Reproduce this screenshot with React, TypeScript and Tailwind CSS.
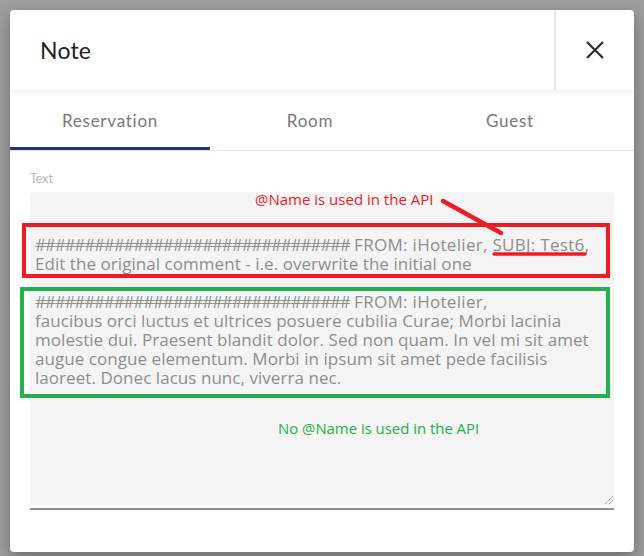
const body = "font-['Lato',sans-serif]";

const hashes = "################################";

const tabs = ["Reservation", "Room", "Guest"];

const greenLines = [
  "faucibus orci luctus et ultrices posuere cubilia Curae; Morbi lacinia",
  "molestie dui. Praesent blandit dolor. Sed non quam. In vel mi sit amet",
  "augue congue elementum. Morbi in ipsum sit amet pede facilisis",
  "laoreet. Donec lacus nunc, viverra nec.",
];

function Hashes() {
  return <span className="tracking-[-1.15px]">{hashes}</span>;
}

function CloseIcon() {
  return (
    <svg width="18" height="18" viewBox="0 0 18 18" className="text-[#2b2b2b]">
      <path d="M1 1 17 17M17 1 1 17" stroke="currentColor" strokeWidth="2.2" fill="none" />
    </svg>
  );
}

function ResizeGrip() {
  return (
    <svg width="10" height="10" viewBox="0 0 10 10" className="text-[#777]">
      <path d="M1 9 9 1M5 9 9 5" stroke="currentColor" strokeWidth="1" strokeDasharray="1 1" fill="none" />
    </svg>
  );
}

export default function App() {
  return (
    <div className={`w-[644px] h-[556px] bg-[#9d9d9d] pt-[10px] px-[10px] ${body}`}>
      <div className="h-[542px] bg-white rounded-[4px] shadow-[0_6px_16px_rgba(0,0,0,0.3)] flex flex-col overflow-hidden">
        {/* header */}
        <div className="relative z-10 h-[80px] flex shadow-[0_3px_5px_rgba(0,0,0,0.05)]">
          <div className="flex-1 flex items-center pl-[30px] text-[23px] text-[#222] tracking-[0.2px]">Note</div>
          <div className="w-[80px] border-l-2 border-[#e6e6e6] flex items-center justify-center">
            <CloseIcon />
          </div>
        </div>

        {/* tabs */}
        <div className="border-b border-[#e2e2e2]">
          <div className="w-[600px] grid grid-cols-3">
            {tabs.map((t, i) => (
              <div key={t} className="h-[60px] flex flex-col pt-[4px]">
                <div className="flex-1 flex items-center justify-center text-[17px] text-[#777] tracking-[0.75px]">{t}</div>
                <div className={i === 0 ? "h-[3px] bg-[#1c3580]" : "h-[3px]"} />
              </div>
            ))}
          </div>
        </div>

        {/* body */}
        <div className="px-[20px] pt-[20px]">
          <div className="text-[12.5px] leading-[16px] text-[#b5b5b5] mb-[5px]">Text</div>
          <div className="relative h-[313px] bg-[#f4f4f4] rounded-[4px] px-[5px] pt-[5px] text-[17px] leading-[19px] tracking-[0.05px] text-[#8e8e8e] font-['Open_Sans',sans-serif]">
            <div className="h-[19px]" />
            <div className="h-[19px]" />
            <div className="whitespace-nowrap">
              <Hashes /> <span className="tracking-[0.3px]">FROM: iHotelier, SUBJ: Test6,</span>
            </div>
            <div className="whitespace-nowrap">Edit the original comment - i.e. overwrite the initial one</div>
            <div className="h-[19px]" />
            <div className="whitespace-nowrap">
              <Hashes /> <span className="tracking-[0.3px]">FROM: iHotelier,</span>
            </div>
            {greenLines.map((l) => (
              <div key={l} className="whitespace-nowrap">{l}</div>
            ))}

            {/* annotations */}
            <div className="absolute left-[225px] top-0 text-[15px] leading-[14px] tracking-normal text-[#ed1c24]">
              @Name is used in the API
            </div>
            <svg className="absolute left-0 top-0 overflow-visible" width="1" height="1">
              <line x1="413" y1="9" x2="471" y2="41" stroke="#ed1c24" strokeWidth="4.5" strokeLinecap="round" />
              <line x1="464" y1="62" x2="555" y2="62" stroke="#ed1c24" strokeWidth="3.5" strokeLinecap="round" />
            </svg>
            <div className="absolute left-[-8px] top-[31px] w-[588px] h-[55px] border-4 border-[#ed1c24]" />
            <div className="absolute left-[-10px] top-[95px] w-[590px] h-[111px] border-4 border-[#22b14c]" />
            <div className="absolute left-[248px] top-[229px] text-[14.9px] leading-[14px] tracking-normal text-[#22b14c]">
              No @Name is used in the API
            </div>

            <div className="absolute right-0 bottom-0">
              <ResizeGrip />
            </div>
          </div>
          <div className="mt-[3px] h-[1.5px] bg-[#8f8f8f]" />
        </div>
      </div>
    </div>
  );
}
